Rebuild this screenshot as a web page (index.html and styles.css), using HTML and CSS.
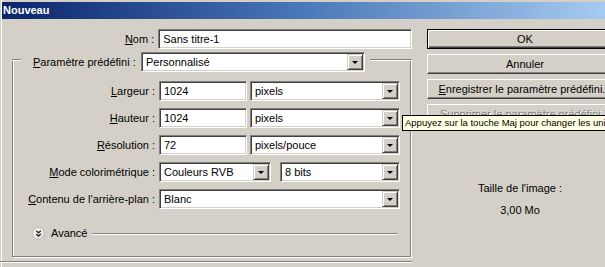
FILE: index.html
```html
<!DOCTYPE html>
<html lang="fr">
<head>
<meta charset="utf-8">
<title>Nouveau</title>
<link rel="stylesheet" href="styles.css">
</head>
<body>
<div class="title">Nouveau</div>
<div class="main">
  <div class="left">
    <div class="row">
      <span class="lbl"><u>N</u>om :</span>
      <div class="field nom"><span class="val">Sans titre-1</span></div>
    </div>
    <div class="group">
      <div class="legend">
        <span class="eline lead"></span>
        <span class="legend-lbl"><u>P</u>aramètre prédéfini :</span>
        <div class="field combo preset"><span class="val">Personnalisé</span><span class="arrow"></span></div>
        <span class="eline fill"></span>
      </div>
      <div class="gbody">
        <div class="row">
          <span class="glbl"><u>L</u>argeur :</span>
          <div class="field num"><span class="val">1024</span></div>
          <div class="field combo unit"><span class="val">pixels</span><span class="arrow"></span></div>
        </div>
        <div class="row">
          <span class="glbl"><u>H</u>auteur :</span>
          <div class="field num"><span class="val">1024</span></div>
          <div class="field combo unit"><span class="val">pixels</span><span class="arrow"></span></div>
        </div>
        <div class="row">
          <span class="glbl"><u>R</u>ésolution :</span>
          <div class="field num"><span class="val">72</span></div>
          <div class="field combo unit"><span class="val">pixels/pouce</span><span class="arrow"></span></div>
        </div>
        <div class="row">
          <span class="glbl"><u>M</u>ode colorimétrique :</span>
          <div class="field combo mode"><span class="val">Couleurs RVB</span><span class="arrow"></span></div>
          <div class="field combo bits"><span class="val">8 bits</span><span class="arrow"></span></div>
        </div>
        <div class="row">
          <span class="glbl"><u>C</u>ontenu de l'arrière-plan :</span>
          <div class="field combo bg"><span class="val">Blanc</span><span class="arrow"></span></div>
        </div>
        <div class="adv">
          <svg class="adv-icon" width="13" height="13" viewBox="0 0 13 13">
            <defs>
              <radialGradient id="g" cx="40%" cy="35%" r="70%">
                <stop offset="0" stop-color="#ffffff"/>
                <stop offset="1" stop-color="#dcdad4"/>
              </radialGradient>
            </defs>
            <circle cx="6.5" cy="6.5" r="6" fill="url(#g)" stroke="#bdbab2" stroke-width="1"/>
            <path d="M4.2 3.8 L6.5 5.8 L8.8 3.8 M4.2 7 L6.5 9 L8.8 7" fill="none" stroke="#222" stroke-width="1.4"/>
          </svg>
          <span class="adv-text">Avancé</span>
          <span class="eline fill adv-line"></span>
        </div>
      </div>
    </div>
  </div>
  <div class="right">
    <div class="btn def">OK</div>
    <div class="btn">Annuler</div>
    <div class="btn"><u>E</u>nregistrer le paramètre prédéfini...</div>
    <div class="btn dis">Supprimer le paramètre prédéfini...</div>
    <div class="size">
      <div class="size-line">Taille de l'image :</div>
      <div class="size-line val2">3,00 Mo</div>
    </div>
  </div>
</div>
<div class="tip">Appuyez sur la touche Maj pour changer les unités</div>
</body>
</html>
```
FILE: styles.css
```css
* { box-sizing: border-box; }
html, body { margin: 0; }
body {
  width: 605px;
  height: 267px;
  overflow: hidden;
  position: relative;
  padding-top: 2px;
  background: #d4d0c8;
  box-shadow: inset 1px 0 #d4d0c8, inset 2px 0 #ffffff;
  font: 11px "Liberation Sans", Arial, sans-serif;
  color: #000;
}
u { text-decoration: underline; text-underline-offset: 1px; }

.title {
  height: 17px;
  margin-left: 2px;
  padding-left: 1px;
  line-height: 17px;
  font-weight: bold;
  color: #fff;
  background: linear-gradient(90deg, #0a246a 0%, #4a78b8 50%, #a6caf0 100%);
}

.main { display: flex; }

.left {
  width: 412px;
  flex-shrink: 0;
  padding-top: 10px;
  padding-bottom: 4px;
  border-bottom: 1px solid #808080;
  box-shadow: 0 1px #ffffff;
}

.row { display: flex; align-items: center; height: 20px; }
.lbl { width: 155px; text-align: right; margin-right: 4px; }
.glbl { width: 142px; text-align: right; margin-right: 4px; white-space: nowrap; }

.field {
  height: 20px;
  display: flex;
  align-items: stretch;
  background: #fff;
  border: 1px solid;
  border-color: #808080 #ffffff #ffffff #808080;
  box-shadow: inset 1px 1px #404040, inset -1px -1px #d4d0c8;
  padding: 1px 1px 1px 4px;
}
.val { flex: 1; line-height: 16px; white-space: nowrap; overflow: hidden; }
.arrow {
  width: 16px;
  flex-shrink: 0;
  position: relative;
  background: #d4d0c8;
  border: 1px solid;
  border-color: #d4d0c8 #404040 #404040 #d4d0c8;
  box-shadow: inset 1px 1px #ffffff, inset -1px -1px #808080;
}
.arrow::after {
  content: "";
  position: absolute;
  left: 4px;
  top: 6px;
  border-left: 3px solid transparent;
  border-right: 3px solid transparent;
  border-top: 3px solid #000;
}

.nom { width: 255px; }

.group { margin-top: 3px; }
.legend { display: flex; height: 20px; margin-left: 12px; width: 400px; }
.eline {
  height: 2px;
  border-top: 1px solid #808080;
  border-bottom: 1px solid #ffffff;
  margin-top: 7px;
}
.lead { width: 9px; flex-shrink: 0; }
.legend-lbl { width: 108px; margin-left: 12px; line-height: 20px; white-space: nowrap; }
.preset { width: 224px; }
.fill { flex: 1; margin-left: 5px; }

.gbody {
  margin-top: -13px;
  margin-left: 12px;
  width: 399px;
  padding: 22px 0 16px 0;
  border: 1px solid #808080;
  border-top: none;
  box-shadow: inset 1px 0 #ffffff, 1px 1px 0 #ffffff;
  display: flex;
  flex-direction: column;
  gap: 7px;
}
.num { width: 88px; }
.unit { width: 150px; margin-left: 3px; }
.mode { width: 112px; }
.bits { width: 120px; margin-left: 9px; }
.bg { width: 241px; }

.adv {
  display: flex;
  height: 13px;
  margin-top: 11px;
  padding-left: 19px;
  padding-right: 13px;
}
.adv-icon { flex-shrink: 0; display: block; }
.adv-text { margin-left: 6px; line-height: 13px; }
.adv-line { margin-top: 6px; margin-left: 4px; }

.right {
  flex-shrink: 0;
  width: 196px;
  margin-left: 15px;
  padding-top: 10px;
  display: flex;
  flex-direction: column;
  gap: 5px;
}
.btn {
  height: 20px;
  width: 196px;
  text-align: center;
  line-height: 18px;
  white-space: nowrap;
  overflow: hidden;
  background: #d4d0c8;
  border: 1px solid;
  border-color: #ffffff #404040 #404040 #ffffff;
  box-shadow: inset -1px -1px #808080;
}
.btn.def {
  border-color: #000;
  box-shadow: inset 1px 1px #ffffff, inset -1px -1px #404040, inset -2px -2px #808080;
}
.btn.dis { color: #808080; text-shadow: 1px 1px #ffffff; }

.size { width: 186px; margin-top: 52px; text-align: center; }
.size-line { line-height: 14px; }
.val2 { margin-top: 8px; }

.tip {
  position: absolute;
  left: 402px;
  top: 115px;
  height: 16px;
  padding: 0 2px;
  line-height: 14px;
  font-size: 9.5px;
  white-space: nowrap;
  background: #ffffe1;
  border: 1px solid #000;
}
```
